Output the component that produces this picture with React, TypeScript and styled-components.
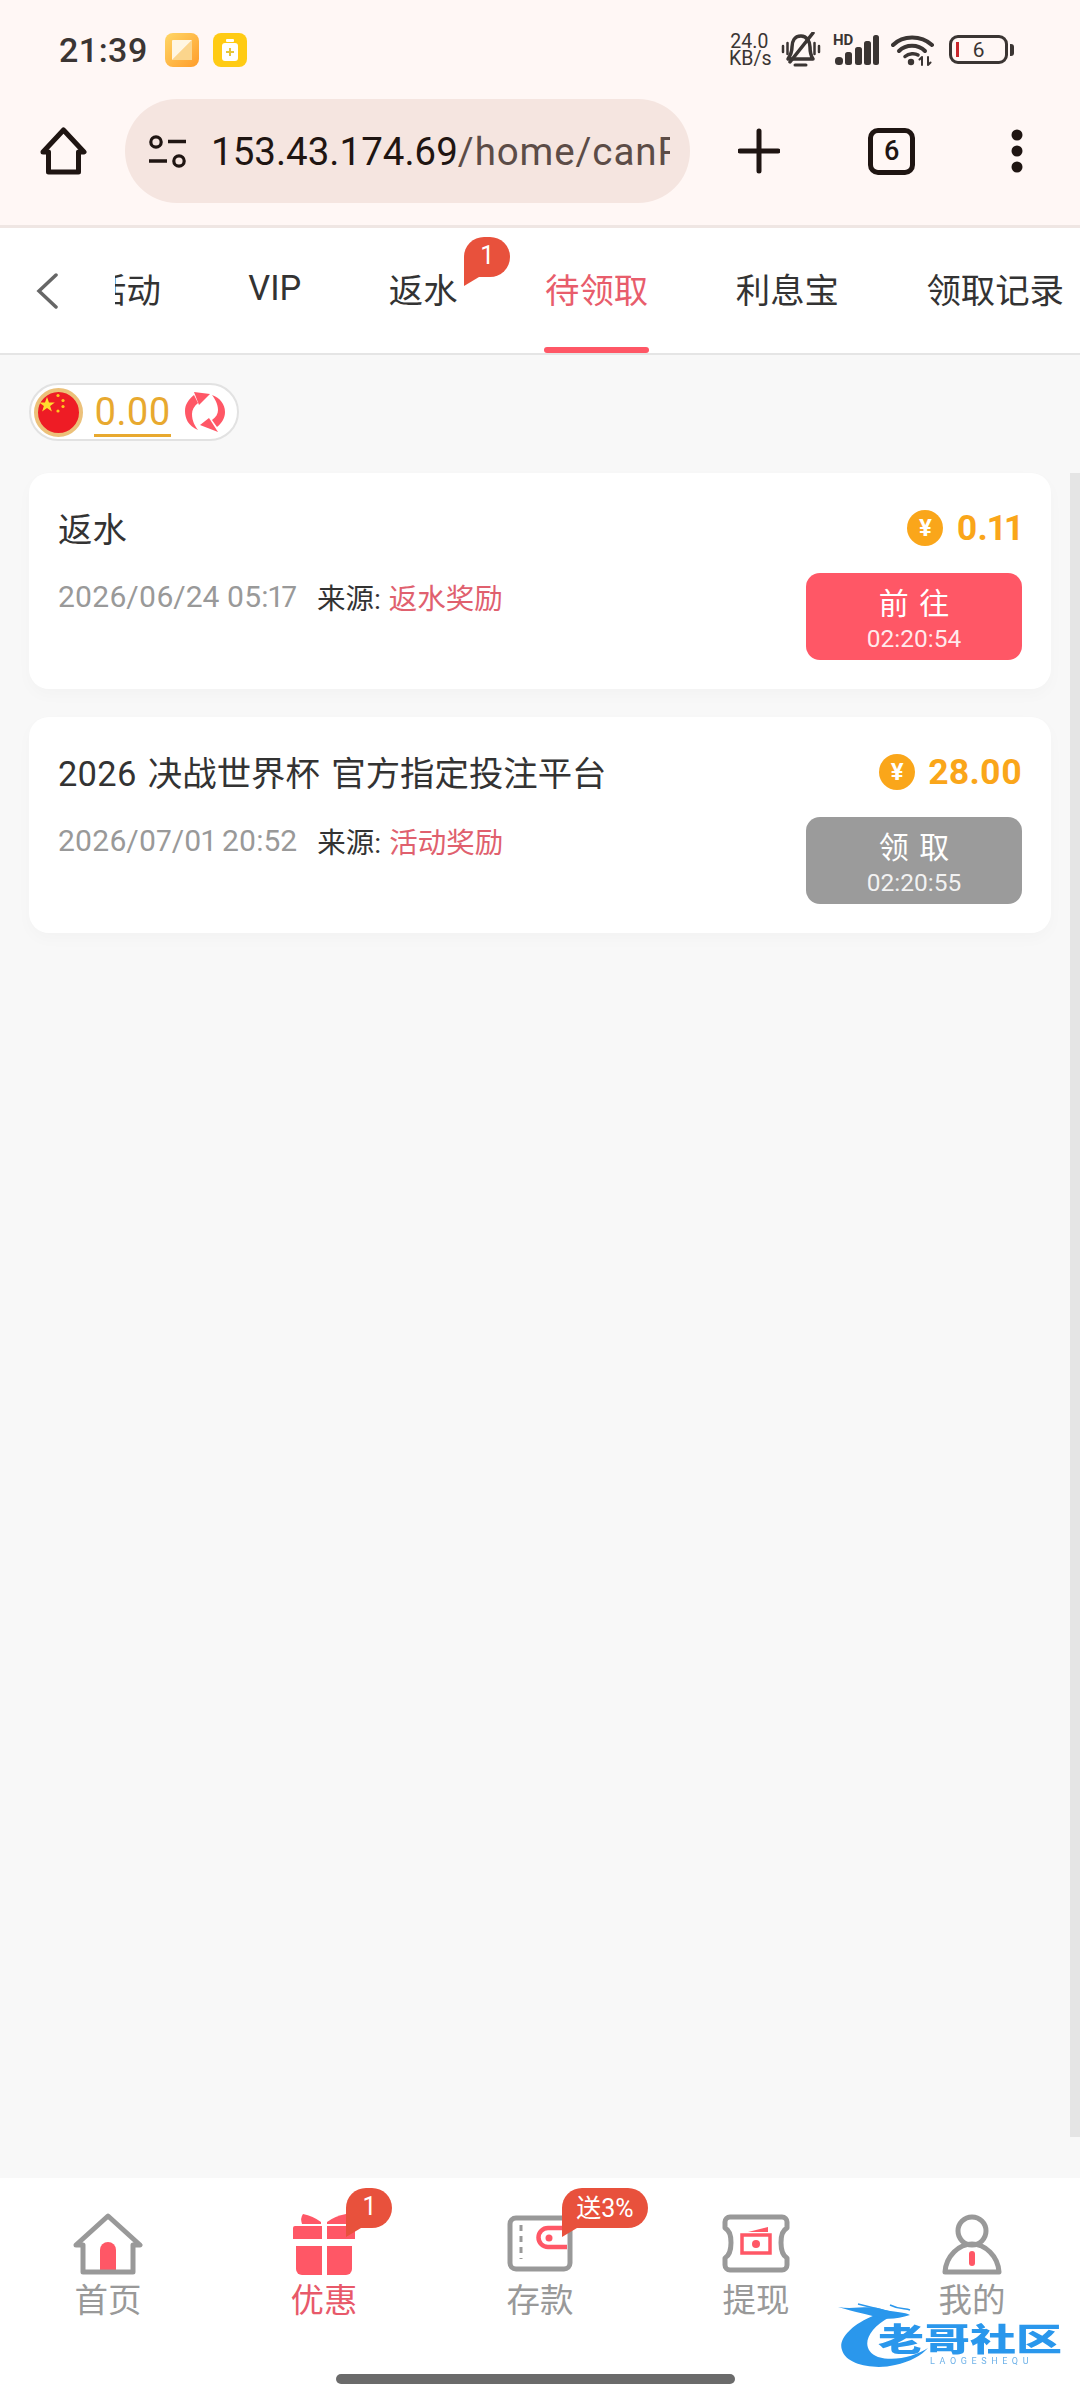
import styled, { createGlobalStyle } from "styled-components";

const font = `Roboto, "Noto Sans CJK SC", sans-serif`;
const coral = "#ff5766";
const badgeRed = "#e8513c";
const ink = "#1f1512";
const statusInk = "#3b3533";

const GlobalStyle = createGlobalStyle`
  html, body {
    margin: 0;
    width: 1080px;
    height: 2400px;
    overflow: hidden;
    background: #f8f8f8;
    font-family: ${font};
    font-variant-numeric: proportional-nums;
  }
  * { box-sizing: border-box; }
`;

const Page = styled.div`
  position: relative;
  display: flex;
  flex-direction: column;
  width: 1080px;
  height: 2400px;
`;

const BrowserHeader = styled.header`
  background: #fff7f5;
  height: 228px;
  border-bottom: 3px solid #efe6e3;
`;

const StatusBar = styled.div`
  height: 99px;
  padding: 0 66px 0 59px;
  display: flex;
  align-items: center;
  justify-content: space-between;
`;

const StatusLeft = styled.div`
  display: flex;
  align-items: center;
`;

const Clock = styled.span`
  width: 86px;
  font-size: 34px;
  font-weight: 500;
  font-variant-numeric: tabular-nums;
  letter-spacing: 0.5px;
  color: ${statusInk};
  margin-right: 20px;
  white-space: nowrap;
`;

const AppIcon = styled.svg`
  width: 34px;
  height: 34px;
  margin-right: 14px;
`;

const StatusRight = styled.div`
  display: flex;
  align-items: center;
`;

const Speed = styled.div`
  width: 41px;
  margin-right: 10px;
  font-size: 19.5px;
  line-height: 17px;
  text-align: center;
  color: ${statusInk};
  white-space: nowrap;
`;

const BellIcon = styled.svg`
  width: 42px;
  height: 35px;
  margin-right: 11px;
`;

const Signal = styled.div`
  position: relative;
  width: 46px;
  height: 30px;
  margin-right: 12px;
`;

const SignalBars = styled.svg`
  display: block;
  width: 46px;
  height: 30px;
`;

const HdMark = styled.span`
  position: absolute;
  left: 0;
  top: -2px;
  font-size: 15px;
  line-height: 15px;
  font-weight: 700;
  color: ${statusInk};
`;

const WifiIcon = styled.svg`
  width: 43px;
  height: 32px;
  margin-right: 15px;
`;

const Battery = styled.div`
  position: relative;
  width: 59px;
  height: 29px;
  border: 3px solid ${statusInk};
  border-radius: 9px;
  display: flex;
  align-items: center;
  justify-content: center;
  font-size: 21px;
  color: ${statusInk};
  &::before {
    content: "";
    position: absolute;
    left: 4px;
    top: 4px;
    width: 3px;
    height: 15px;
    background: #c8262c;
  }
`;

const BatteryNub = styled.span`
  width: 4px;
  height: 12px;
  margin-left: 2px;
  border-radius: 0 3px 3px 0;
  background: ${statusInk};
`;

const BrowserRow = styled.div`
  display: flex;
  align-items: center;
  height: 104px;
  padding-left: 40px;
`;

const ToolIcon = styled.svg<{ $left: number; $width: number }>`
  flex: none;
  margin-left: ${(p) => p.$left}px;
  width: ${(p) => p.$width}px;
  height: 48px;
`;

const AddressBar = styled.div`
  flex: none;
  display: flex;
  align-items: center;
  margin-left: 38px;
  width: 565px;
  height: 104px;
  padding: 0 20px 0 23px;
  border-radius: 52px;
  background: #f5e5e0;
`;

const TuneIcon = styled.svg`
  flex: none;
  width: 39px;
  height: 33px;
  margin-right: 24px;
`;

const UrlText = styled.div`
  flex: 1;
  overflow: hidden;
  white-space: nowrap;
  font-size: 38.5px;
  font-variant-numeric: tabular-nums;
  color: ${ink};
`;

const UrlPath = styled.span`
  color: #5c4c47;
  letter-spacing: 0.9px;
`;

const TabCount = styled.div`
  flex: none;
  margin-left: 88px;
  width: 47px;
  height: 47px;
  border: 5px solid ${ink};
  border-radius: 10px;
  display: flex;
  align-items: center;
  justify-content: center;
  font-size: 27px;
  font-weight: 500;
  color: ${ink};
`;

const TabsBar = styled.nav`
  display: flex;
  align-items: center;
  height: 127px;
  background: #fff;
  border-bottom: 2px solid #e5e5e5;
  padding-left: 36px;
`;

const BackIcon = styled.svg`
  flex: none;
  width: 22px;
  height: 36px;
  margin: 0 57px 0 0;
`;

const TabsViewport = styled.div`
  flex: 1;
  min-width: 0;
  overflow: hidden;
`;

const TabsStrip = styled.div`
  display: flex;
  gap: 87.5px;
  margin-left: -23px;
  width: max-content;
`;

const Tab = styled.div<{ $active?: boolean }>`
  position: relative;
  height: 125px;
  padding-bottom: 6px;
  display: flex;
  align-items: center;
  font-size: 34.4px;
  white-space: nowrap;
  color: ${(p) => (p.$active ? "#e85d6c" : "#333")};
  ${(p) =>
    p.$active &&
    `&::after {
      content: "";
      position: absolute;
      left: -1px;
      right: -1px;
      bottom: 0;
      height: 6px;
      border-radius: 3px;
      background: ${coral};
    }`}
`;

const Bubble = styled.span<{ $left: number; $top: number; $width: number }>`
  position: absolute;
  left: ${(p) => p.$left}px;
  top: ${(p) => p.$top}px;
  width: ${(p) => p.$width}px;
  height: 40px;
  display: flex;
  align-items: center;
  justify-content: center;
  padding-bottom: 4px;
  border-radius: 20px 20px 20px 0;
  background: ${badgeRed};
  color: #fff;
  font-size: 25px;
  white-space: nowrap;
  &::after {
    content: "";
    position: absolute;
    left: 0;
    bottom: -9px;
    border-top: 9px solid ${badgeRed};
    border-right: 15px solid transparent;
  }
`;

const Content = styled.main`
  position: relative;
  flex: 1;
  padding: 28px 29px 0;
  background: #f8f8f8;
`;

const BalanceChip = styled.div`
  display: inline-flex;
  align-items: center;
  height: 58px;
  width: 210px;
  padding: 0 0 0 3px;
  background: #fff;
  border: 2px solid #e2e2e2;
  border-radius: 29px;
`;

const FlagIcon = styled.svg`
  flex: none;
  width: 49px;
  height: 49px;
  margin-right: 11px;
`;

const BalanceValue = styled.span`
  flex: none;
  width: 77px;
  height: 47px;
  margin-top: 2px;
  font-size: 38px;
  line-height: 44px;
  font-weight: 400;
  text-align: center;
  color: #e8a92f;
  border-bottom: 3px solid #e8a92f;
`;

const RefreshIcon = styled.svg`
  flex: none;
  width: 40px;
  height: 42px;
  margin-left: 14px;
`;

const CardList = styled.div`
  display: flex;
  flex-direction: column;
  gap: 28px;
  margin-top: 32px;
  width: 1022px;
`;

const Card = styled.section`
  display: flex;
  justify-content: space-between;
  height: 216px;
  padding: 0 29px;
  background: #fff;
  border-radius: 20px;
  box-shadow: 0 6px 16px rgba(0, 0, 0, 0.025);
`;

const CardMain = styled.div`
  padding-top: 33px;
`;

const CardTitle = styled.div`
  height: 48px;
  line-height: 48px;
  font-size: 34.4px;
  word-spacing: 3px;
  color: #333;
  white-space: nowrap;
`;

const CardMeta = styled.div`
  display: flex;
  align-items: center;
  height: 40px;
  margin-top: 22px;
  white-space: nowrap;
`;

const CardDate = styled.span`
  font-size: 30px;
  color: #999;
  margin-right: 20px;
`;

const Source = styled.span`
  font-size: 28.5px;
  color: #333;
  margin-right: 8px;
`;

const SourceName = styled.span`
  font-size: 28.5px;
  color: #e0606e;
`;

const CardSide = styled.div`
  display: flex;
  flex-direction: column;
  align-items: flex-end;
  padding-top: 35px;
`;

const Amount = styled.div`
  display: flex;
  align-items: center;
  height: 36px;
  margin-top: 2px;
  margin-bottom: -2px;
  font-size: 35.5px;
  font-weight: 700;
  color: #faa61a;
`;

const Coin = styled.span`
  width: 36px;
  height: 36px;
  margin-right: 13px;
  border-radius: 50%;
  background: #faa61a;
  color: #fff;
  display: flex;
  align-items: center;
  justify-content: center;
  font-size: 24px;
  font-weight: 700;
`;

const ActionButton = styled.button<{ $muted?: boolean }>`
  width: 216px;
  height: 87px;
  margin-top: 29px;
  padding: 0;
  border: 0;
  border-radius: 14px;
  background: ${(p) => (p.$muted ? "#9b9b9b" : coral)};
  color: #fff;
  font-family: ${font};
  display: flex;
  flex-direction: column;
  align-items: center;
`;

const ActionLabel = styled.span`
  margin-top: 14px;
  font-size: 30px;
  line-height: 34px;
  word-spacing: 3px;
  white-space: pre;
`;

const ActionTimer = styled.span`
  margin-top: 6px;
  font-size: 24.5px;
  line-height: 24px;
  color: rgba(255, 255, 255, 0.88);
`;

const ScrollTrack = styled.div`
  position: absolute;
  right: 0;
  top: 118px;
  width: 10px;
  height: 1664px;
  background: #e5e5e5;
`;

const BottomNav = styled.footer`
  height: 222px;
  background: #fff;
  box-shadow: 0 -2px 6px rgba(0, 0, 0, 0.07);
`;

const NavRow = styled.div`
  display: grid;
  grid-template-columns: repeat(5, 216px);
  height: 141px;
`;

const NavItem = styled.div<{ $active?: boolean }>`
  position: relative;
  display: flex;
  flex-direction: column;
  align-items: center;
  padding-top: 35px;
  font-size: 33.5px;
  color: ${(p) => (p.$active ? "#e8596a" : "#999")};
`;

const NavIcon = styled.svg`
  display: block;
  width: 70px;
  height: 62px;
`;

const NavLabel = styled.span`
  margin-top: 7px;
  line-height: 38px;
`;

const HomeIndicator = styled.div`
  width: 399px;
  height: 10px;
  margin: 55px 0 0 336px;
  border-radius: 5px;
  background: #6b6b6b;
`;

const Watermark = styled.div`
  position: absolute;
  left: 830px;
  top: 2290px;
  width: 240px;
  height: 85px;
  filter: blur(0.7px);
`;

const WatermarkDragon = styled.svg`
  position: absolute;
  inset: 0;
  width: 240px;
  height: 85px;
`;

const WatermarkName = styled.span`
  position: absolute;
  left: 48px;
  top: 27px;
  font-size: 46px;
  line-height: 46px;
  font-weight: 900;
  white-space: nowrap;
  transform: scaleY(0.68);
  transform-origin: left center;
  color: #2a97ec;
`;

const WatermarkLatin = styled.span`
  position: absolute;
  left: 100px;
  top: 66px;
  font-size: 9px;
  line-height: 10px;
  letter-spacing: 4.6px;
  white-space: nowrap;
  color: #6fb2e8;
`;

const Card1 = {
  title: "返水",
  amount: "0.11",
  date: "2026/06/24 05:17",
  source: "返水奖励",
  action: "前 往",
  timer: "02:20:54",
  muted: false,
};

const Card2 = {
  title: "2026 决战世界杯 官方指定投注平台",
  amount: "28.00",
  date: "2026/07/01 20:52",
  source: "活动奖励",
  action: "领 取",
  timer: "02:20:55",
  muted: true,
};

export default function App() {
  return (
    <Page>
      <GlobalStyle />
      <BrowserHeader>
        <StatusBar>
          <StatusLeft>
            <Clock>21:39</Clock>
            <AppIcon viewBox="0 0 34 34">
              <defs>
                <linearGradient id="noteBg" x1="0" y1="0" x2="1" y2="1">
                  <stop offset="0" stopColor="#ffd766" />
                  <stop offset="1" stopColor="#ff9c2a" />
                </linearGradient>
              </defs>
              <rect width="34" height="34" rx="8" fill="url(#noteBg)" />
              <path d="M7 27 L27 7 V27 Z" fill="#fbd58c" />
              <path d="M7 8 a1 1 0 0 1 1-1 H27 L7 27 Z" fill="#fff6e2" />
            </AppIcon>
            <AppIcon viewBox="0 0 34 34">
              <rect width="34" height="34" rx="8" fill="#ffcb14" />
              <rect x="13" y="6" width="8" height="3" rx="1" fill="#fff" />
              <rect x="9" y="10" width="16" height="18" rx="3" fill="#fff" />
              <path d="M17 15 v8 M13 19 h8" stroke="#e6c63a" strokeWidth="2" />
            </AppIcon>
          </StatusLeft>
          <StatusRight>
            <Speed>
              24.0
              <br />
              KB/s
            </Speed>
            <BellIcon viewBox="0 0 42 35" fill="none" stroke={statusInk} strokeLinecap="round">
              <path d="M3 14 v6 M7.5 11 v11 M34.5 11 v11 M39 14 v6" strokeWidth="2.5" />
              <path
                d="M21 4 C14 4 12 10 12 15 C12 21 10 24 8 27 H33 C31 24 30 20 30 15 C30 10 27 4 21 4 Z"
                strokeWidth="3.5"
                strokeLinejoin="round"
              />
              <path d="M15 33 H26" strokeWidth="3" />
              <path d="M33 1 L10 30" strokeWidth="3.5" />
            </BellIcon>
            <Signal>
              <HdMark>HD</HdMark>
              <SignalBars viewBox="0 0 46 30" fill={statusInk}>
                <rect x="2" y="22" width="8" height="8" rx="3.5" />
                <rect x="12" y="17" width="7" height="13" rx="2.5" />
                <rect x="22" y="12" width="7" height="18" rx="2.5" />
                <rect x="31" y="6" width="7" height="24" rx="2.5" />
                <rect x="40" y="0" width="6" height="30" rx="2.5" />
              </SignalBars>
            </Signal>
            <WifiIcon viewBox="0 0 43 32" fill="none" stroke={statusInk} strokeLinecap="round">
              <path d="M2 11 C12 1 30 1 41 11" strokeWidth="4" />
              <path d="M8 17 C15 10 27 10 34 17" strokeWidth="4" />
              <path d="M14 22.5 C18 19 24 19 27 21" strokeWidth="3.5" />
              <circle cx="20" cy="28" r="3.2" fill={statusInk} stroke="none" />
              <path d="M31 31 V23 M28.5 25.5 L31 23 M37 23 V31 M37 31 L39.5 28.5" strokeWidth="2" />
            </WifiIcon>
            <Battery>6</Battery>
            <BatteryNub />
          </StatusRight>
        </StatusBar>
        <BrowserRow>
          <ToolIcon $left={0} $width={47} viewBox="0 0 47 48" fill="none" stroke={ink} strokeWidth="5" strokeLinejoin="round">
            <path d="M3 25 L23.5 3 L44 25 H38.5 V45 H8.5 V25 Z" />
          </ToolIcon>
          <AddressBar>
            <TuneIcon viewBox="0 0 39 33" fill="none" stroke={ink} strokeWidth="3.2">
              <circle cx="8" cy="7" r="5.2" />
              <path d="M20 6.5 H38 M1 26 H19" strokeWidth="3.6" />
              <circle cx="31" cy="26" r="5.2" />
            </TuneIcon>
            <UrlText>
              153.43.174.69<UrlPath>/home/canReceive</UrlPath>
            </UrlText>
          </AddressBar>
          <ToolIcon $left={48} $width={42} viewBox="0 0 42 48" fill="none" stroke={ink} strokeWidth="5" strokeLinecap="round">
            <path d="M21 4 V44 M2 24 H40" />
          </ToolIcon>
          <TabCount>6</TabCount>
          <ToolIcon $left={96} $width={12} viewBox="0 0 12 48" fill={ink}>
            <circle cx="6" cy="8" r="5.5" />
            <circle cx="6" cy="24" r="5.5" />
            <circle cx="6" cy="40" r="5.5" />
          </ToolIcon>
        </BrowserRow>
      </BrowserHeader>

      <TabsBar>
        <BackIcon viewBox="0 0 22 36" fill="none" stroke="#666" strokeWidth="3.5" strokeLinecap="round">
          <path d="M20 2 L3 18 L20 34" />
        </BackIcon>
        <TabsViewport>
          <TabsStrip>
            <Tab>活动</Tab>
            <Tab>VIP</Tab>
            <Tab>
              返水
              <Bubble $left={75} $top={9} $width={46}>1</Bubble>
            </Tab>
            <Tab $active>待领取</Tab>
            <Tab>利息宝</Tab>
            <Tab>领取记录</Tab>
          </TabsStrip>
        </TabsViewport>
      </TabsBar>

      <Content>
        <BalanceChip>
          <FlagIcon viewBox="0 0 49 49">
            <circle cx="24.5" cy="24.5" r="22.5" fill="#ee1c25" stroke="#ecc17a" strokeWidth="4" />
            <path
              d="M13 9 l2 5.5 h5.8 l-4.7 3.4 1.8 5.6 -4.9-3.4 -4.9 3.4 1.8-5.6 -4.7-3.4 h5.8 z"
              fill="#ffdd2e"
            />
            <circle cx="24" cy="7.5" r="1.6" fill="#ffc81e" />
            <circle cx="29" cy="12.5" r="1.6" fill="#ffc81e" />
            <circle cx="29" cy="18.5" r="1.6" fill="#ffc81e" />
            <circle cx="24" cy="23" r="1.6" fill="#ffc81e" />
          </FlagIcon>
          <BalanceValue>0.00</BalanceValue>
          <RefreshIcon viewBox="0 0 40 42" fill={coral}>
            <path d="M13 39 C3 35 0 27 0 20 C0 13 4 8 9 4 L13 12 C9 15 7 19 7 23 C7 30 10 35 13 39 Z" />
            <path d="M9 1 L25 3 L14 14 Z" />
            <path d="M27 4 C35 7 40 13 40 21 C40 27 37 32 32 36 L27 29 C31 26 33 23 33 19 C33 13 30 8 27 4 Z" />
            <path d="M33 41 L15 34 L24 27 Z" />
          </RefreshIcon>
        </BalanceChip>

        <CardList>
          {[Card1, Card2].map((c) => (
            <Card key={c.date}>
              <CardMain>
                <CardTitle>{c.title}</CardTitle>
                <CardMeta>
                  <CardDate>{c.date}</CardDate>
                  <Source>来源:</Source>
                  <SourceName>{c.source}</SourceName>
                </CardMeta>
              </CardMain>
              <CardSide>
                <Amount>
                  <Coin>¥</Coin>
                  {c.amount}
                </Amount>
                <ActionButton $muted={c.muted}>
                  <ActionLabel>{c.action}</ActionLabel>
                  <ActionTimer>{c.timer}</ActionTimer>
                </ActionButton>
              </CardSide>
            </Card>
          ))}
        </CardList>
        <ScrollTrack />
      </Content>

      <BottomNav>
        <NavRow>
          <NavItem>
            <NavIcon viewBox="0 0 70 62" fill="none">
              <path d="M27 37 a8 8 0 0 1 16 0 V60 H27 Z" fill={coral} />
              <path
                d="M3 32 L35 3 L67 32 H60 V59 H10 V32 Z"
                stroke="#999"
                strokeWidth="5"
                strokeLinejoin="round"
              />
            </NavIcon>
            <NavLabel>首页</NavLabel>
          </NavItem>
          <NavItem $active>
            <NavIcon viewBox="0 0 70 62" fill={coral}>
              <path d="M14 1 Q24 3 32 9 V11 H13 Q11 5 14 1 Z" />
              <path d="M38 11 V9 Q46 3 57 1 V11 Z" />
              <path d="M4 15 a2 2 0 0 1 2-2 H33 V26 H4 Z" />
              <path d="M38 13 H64 a2 2 0 0 1 2 2 V26 H38 Z" />
              <path d="M7 33 H33 V62 H13 a6 6 0 0 1 -6-6 Z" />
              <path d="M38 33 H63 V56 a6 6 0 0 1 -6 6 H38 Z" />
            </NavIcon>
            <NavLabel>优惠</NavLabel>
            <Bubble $left={130} $top={10} $width={46}>1</Bubble>
          </NavItem>
          <NavItem>
            <NavIcon viewBox="0 0 70 62" fill="none">
              <rect x="5" y="5" width="60" height="51" rx="6" stroke="#999" strokeWidth="5" />
              <path d="M16 12 V46" stroke="#999" strokeWidth="3" strokeDasharray="6 5" />
              <path d="M62 15 H43 a9 9 0 0 0 0 19 H62" stroke={coral} strokeWidth="4.5" />
              <circle cx="44" cy="25" r="3.5" fill={coral} />
            </NavIcon>
            <NavLabel>存款</NavLabel>
            <Bubble $left={130} $top={10} $width={86}>送3%</Bubble>
          </NavItem>
          <NavItem>
            <NavIcon viewBox="0 0 70 62" fill="none">
              <path
                d="M9 4 H61 a5 5 0 0 1 5 5 V15 C58 19 58 40 66 45 V52 a5 5 0 0 1 -5 5 H9 a5 5 0 0 1 -5 -5 V45 C12 40 12 19 4 15 V9 a5 5 0 0 1 5 -5 Z"
                stroke="#999"
                strokeWidth="5"
                strokeLinejoin="round"
              />
              <rect x="21" y="22" width="28" height="18" stroke={coral} strokeWidth="3.5" />
              <circle cx="35" cy="31" r="4" fill={coral} />
              <path d="M27 19 L47 14 V19 Z" fill={coral} />
            </NavIcon>
            <NavLabel>提现</NavLabel>
          </NavItem>
          <NavItem>
            <NavIcon viewBox="0 0 70 62" fill="none">
              <circle cx="35" cy="18" r="14" stroke="#999" strokeWidth="5" />
              <path
                d="M8 59 C9 43 22 31 35 31 C48 31 61 43 62 59 Z"
                stroke="#999"
                strokeWidth="5"
                strokeLinejoin="round"
              />
              <rect x="32" y="38" width="6" height="15" rx="3" fill={coral} />
            </NavIcon>
            <NavLabel>我的</NavLabel>
          </NavItem>
        </NavRow>
        <HomeIndicator />
      </BottomNav>

      <Watermark>
        <WatermarkDragon viewBox="0 0 240 85" fill="#2a97ec">
          <path d="M45 25 C20 35 8 50 12 60 C16 75 45 80 65 75 C80 72 92 65 98 58 C85 66 65 72 48 67 C30 60 35 40 60 27 Z" />
          <path d="M8 17 C25 20 40 14 55 20 C65 22 75 22 80 25 C70 28 60 30 50 28 C40 25 25 22 8 17 Z" />
          <path d="M28 14 L60 22 M60 15 C70 20 75 18 80 20" stroke="#2a97ec" strokeWidth="1.5" fill="none" />
        </WatermarkDragon>
        <WatermarkName>老哥社区</WatermarkName>
        <WatermarkLatin>LAOGESHEQU</WatermarkLatin>
      </Watermark>
    </Page>
  );
}
